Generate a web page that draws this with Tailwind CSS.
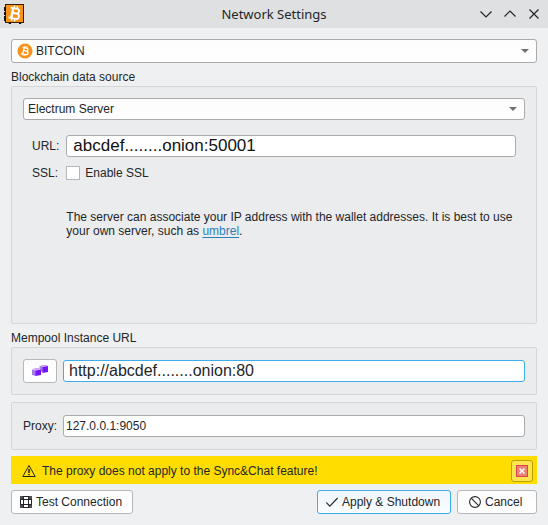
<!DOCTYPE html>
<html lang="en">
<head>
<meta charset="utf-8">
<meta name="viewport" content="width=device-width, initial-scale=1">
<title>Network Settings</title>
<script src="https://cdn.jsdelivr.net/npm/@tailwindcss/browser@4"></script>
</head>
<body class="min-h-screen bg-[#eff0f1] font-['Liberation_Sans',Arial,sans-serif] text-[12px] leading-[14px] text-[#232629]">
<header class="flex h-7 items-center bg-[#dee0e2] pr-[6px] pl-1">
  <svg class="size-5 shrink-0" viewBox="0 0 20 20" aria-hidden="true">
    <path d="M4 18h3v2H5zM15 18h3l-1 2h-2z" fill="#111"/>
    <rect x="1.500" y=".5" width="18" height="18" fill="#f7931a" stroke="#3a2008"/>
    <path d="M0 3h2v4H0zM0 8h2v3H0zM0 12h2v5H0z" fill="#111"/>
    <g transform="rotate(12 10.500 9.500)" fill="none" stroke="#fff">
      <path d="M5.500 4.500h6.500c3.400 0 3.400 4.700 0 4.700H8.500h4c3.900 0 3.900 5.300 0 5.300H5.500" stroke-width="1.900"/>
      <path d="M8.200 4.500v10" stroke-width="2.400"/>
      <path d="M9 1.800v2.500M12 1.800v2.500M9 14.700v2.500M12 14.700v2.500" stroke-width="1.500"/>
    </g>
  </svg>
  <h1 class="flex-1 pl-[46px] text-center font-['Noto_Sans',sans-serif] text-[13px] leading-5">Network Settings</h1>
  <div class="flex gap-2">
    <button type="button" aria-label="Minimize" class="size-4"><svg class="size-4" viewBox="0 0 16 16" fill="none" stroke="#232629" stroke-width="1.200"><path d="M2.500 5.500 8 11l5.500-5.500"/></svg></button>
    <button type="button" aria-label="Maximize" class="size-4"><svg class="size-4" viewBox="0 0 16 16" fill="none" stroke="#232629" stroke-width="1.200"><path d="M2.500 10.500 8 5l5.500 5.500"/></svg></button>
    <button type="button" aria-label="Close" class="size-4"><svg class="size-4" viewBox="0 0 16 16" fill="none" stroke="#232629" stroke-width="1.200"><path d="m3.500 3.500 9 9m0-9-9 9"/></svg></button>
  </div>
</header>
<main class="px-[11px] pt-[11px] pb-[10px]">
  <div class="relative">
    <select aria-label="Network" class="block h-6 w-full appearance-none rounded-[3px] border border-[#a9abac] bg-linear-to-b from-[#fcfcfc] to-white pl-6">
      <option>BITCOIN</option>
    </select>
    <svg class="pointer-events-none absolute top-1 left-[6px] size-4" viewBox="0 0 16 16" aria-hidden="true">
      <circle cx="8" cy="8" r="7.500" fill="#f7931a"/>
      <g transform="rotate(13 8 8)" fill="none" stroke="#fff" stroke-width="1.300">
        <path d="M4.800 4.800H9c2.200 0 2.200 3 0 3H6.500h3c2.600 0 2.600 3.500 0 3.500H4.800M6.400 4.800v6.500"/>
        <path d="M7 3v2M9 3v2M7 11v2M9 11v2" stroke-width="1"/>
      </g>
    </svg>
    <svg class="pointer-events-none absolute top-[10px] right-2 h-1 w-2" viewBox="0 0 8 4" aria-hidden="true"><path d="M0 0h8L4 4z" fill="#6e7173"/></svg>
  </div>

  <section>
    <h2 class="mt-[7px] mb-[2px]">Blockchain data source</h2>
    <div class="h-[238px] rounded-[2px] border border-[#d4d6d8] bg-[#ebecee] px-[11px] pt-[11px]">
      <div class="relative">
        <select aria-label="Server type" class="block h-[22px] w-full appearance-none rounded-[3px] border border-[#a9abac] bg-linear-to-b from-[#fcfcfc] to-white pl-1">
          <option>Electrum Server</option>
        </select>
        <svg class="pointer-events-none absolute top-[9px] right-2 h-1 w-2" viewBox="0 0 8 4" aria-hidden="true"><path d="M0 0h8L4 4z" fill="#6e7173"/></svg>
      </div>
      <div class="mt-[15px] grid grid-cols-[auto_1fr] items-center gap-x-[7px] gap-y-[9px] px-[9px]">
        <label for="url">URL:</label>
        <input id="url" type="text" value="abcdef........onion:50001" class="h-[22px] w-full rounded-[3px] border border-[#a9abac] bg-white px-[6px] text-[17px] text-[#111] outline-none">
        <span>SSL:</span>
        <label class="flex items-center gap-[5px]"><input type="checkbox" class="size-[14px] appearance-none border border-[#b5b7b9] bg-white">Enable SSL</label>
        <p class="col-start-2 mt-[21px]">The server can associate your IP address with the wallet addresses. It is best to use your own server, such as <a href="#" class="text-[#2980b9] underline underline-offset-2">umbrel</a>.</p>
      </div>
    </div>
  </section>

  <section>
    <h2 class="mt-[7px] mb-[2px]">Mempool Instance URL</h2>
    <div class="flex h-12 items-center gap-[6px] rounded-[2px] border border-[#d4d6d8] bg-[#ebecee] px-[11px]">
      <button type="button" aria-label="Choose mempool instance" class="flex h-6 w-[34px] shrink-0 items-center justify-center rounded-[3px] border border-[#b5b7b9] bg-linear-to-b from-[#fcfcfc] to-white">
        <svg class="size-4" viewBox="0 0 16 16" aria-hidden="true">
          <path d="M7.500 3.500 10 2h6l-2.500 1.500z" fill="#c9a6f7"/><path d="M7.500 3 11 3.500V9L8 8.500z" fill="#a77be8"/><path d="M10.500 4 16 3v6l-5.500 1z" fill="#7514fa"/>
          <path d="M0 6.500 3 5h6l-3 2z" fill="#c9a6f7"/><path d="M0 6.500 4 7.500v5.500L0 12z" fill="#a77be8"/><path d="M3.500 7.500 9 6.500v5.500l-5.500 1z" fill="#7514fa"/>
        </svg>
      </button>
      <input aria-label="Mempool Instance URL" type="text" value="http://abcdef........onion:80" class="h-[22px] min-w-0 flex-1 rounded-[3px] border border-[#3daee9] bg-white px-[5px] text-[16px] text-[#232629] outline-none">
    </div>
  </section>

  <div class="mt-[7px] flex h-12 items-center gap-[6px] rounded-[2px] border border-[#d4d6d8] bg-[#ebecee] px-[11px]">
    <label for="proxy">Proxy:</label>
    <input id="proxy" type="text" value="127.0.0.1:9050" class="h-[22px] min-w-0 flex-1 rounded-[3px] border border-[#a9abac] bg-white px-[2px] outline-none">
  </div>

  <div role="alert" class="mt-[6px] flex h-7 items-center bg-[#ffdd00] pt-px pr-1 pl-[11px] text-[#232629]">
    <svg class="mr-[6px] size-[14px]" viewBox="0 0 14 14" aria-hidden="true"><path d="M7 1.500 13.200 12.500H.8z" fill="none" stroke="#232629"/><path d="M6.200 5h1.600v4H6.200zM6.200 10h1.600v1.300H6.200z" fill="#232629"/></svg>
    <span class="flex-1">The proxy does not apply to the Sync&amp;Chat feature!</span>
    <button type="button" aria-label="Dismiss" class="flex size-[22px] items-center justify-center rounded-[3px] border border-[#b7a000] bg-[#ffe54d]">
      <svg class="size-3" viewBox="0 0 12 12"><rect x=".5" y=".5" width="11" height="11" fill="#ed8273" stroke="#da4453"/><path d="m3.500 3.500 5 5m0-5-5 5" stroke="#fff" stroke-width="1.500"/></svg>
    </button>
  </div>

  <div class="mt-[6px] flex h-6 gap-[6px]">
    <button type="button" class="mr-auto flex min-w-[122px] items-center gap-1 rounded-[3px] border border-[#b5b7b9] bg-linear-to-b from-[#fcfcfc] to-white px-2">
      <svg class="size-3" viewBox="0 0 12 12" fill="none" stroke="#232629" aria-hidden="true"><path d="M3 .5h6M3 11.500h6M.5 3v6M11.500 3v6"/><path d="M3.500 1v10M8.500 1v10M1 3.500h10M1 8.500h10"/><path d="M0 0h3v3H0zM9 0h3v3H9zM0 9h3v3H0zM9 9h3v3H9z" fill="#232629" fill-opacity=".8" stroke="none"/></svg>
      Test Connection
    </button>
    <button type="button" class="flex min-w-[134px] items-center gap-1 rounded-[3px] border border-[#3daee9] bg-linear-to-b from-[#eff7fb] to-[#fafdff] px-2">
      <svg class="h-3 w-3" viewBox="0 0 12 12" fill="none" stroke="#232629" stroke-width="1.100" aria-hidden="true"><path d="m.4 6.500 3.400 3.700L11.600 2"/></svg>
      Apply &amp; Shutdown
    </button>
    <button type="button" class="flex min-w-[80px] items-center gap-1 rounded-[3px] border border-[#b5b7b9] bg-linear-to-b from-[#fcfcfc] to-white px-[11px]">
      <svg class="size-3" viewBox="0 0 12 12" fill="none" stroke="#232629" stroke-width="1.100" aria-hidden="true"><circle cx="6" cy="6" r="5.400"/><path d="m2.200 2.200 7.600 7.600"/></svg>
      Cancel
    </button>
  </div>
</main>
</body>
</html>
